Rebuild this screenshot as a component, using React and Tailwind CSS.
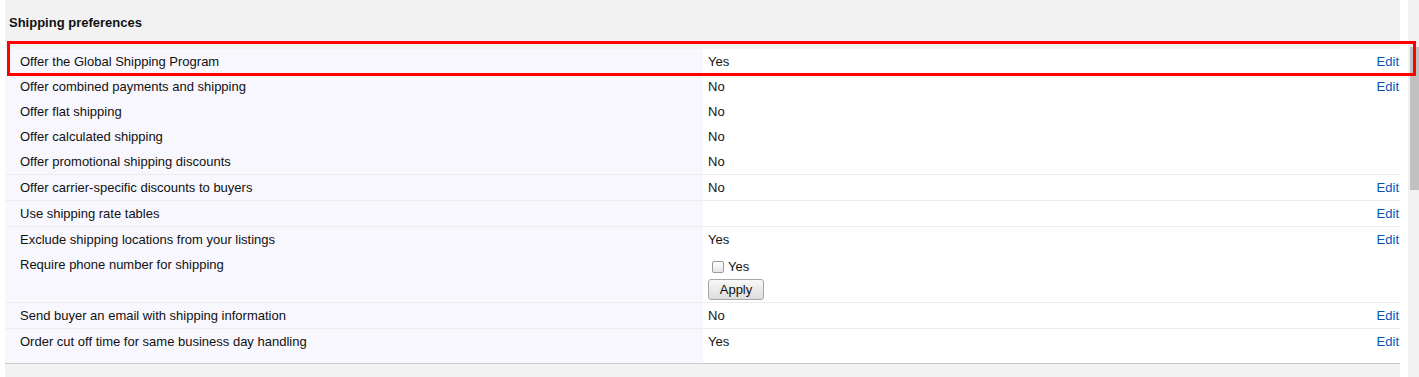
const rowsTop = [
  { label: 'Offer the Global Shipping Program', value: 'Yes', edit: true },
  { label: 'Offer combined payments and shipping', value: 'No', edit: true },
  { label: 'Offer flat shipping', value: 'No' },
  { label: 'Offer calculated shipping', value: 'No' },
  { label: 'Offer promotional shipping discounts', value: 'No' },
];

function EditLink() {
  return <a href="#" className="text-[#0654ba] pr-px">Edit</a>;
}

function Row({ label, value, edit, border, className = 'h-[25px] items-center' }) {
  return (
    <div className={`grid grid-cols-[698px_1fr] ${border ? 'border-t border-[#ededed]' : ''}`}>
      <div className={`flex bg-[#f7f7fd] pl-[15px] ${className}`}>{label}</div>
      <div className={`flex justify-between bg-white pl-[5px] ${className}`}>
        <span>{value}</span>
        {edit && <EditLink />}
      </div>
    </div>
  );
}

export default function App() {
  return (
    <div
      className="relative flex h-[377px] w-[1419px] overflow-hidden bg-white text-[13px] leading-[15px] text-[#111]"
      style={{ fontFamily: '"Liberation Sans", Arial, sans-serif' }}
    >
      <div className="ml-[5px] flex w-[1395px] flex-col bg-[#f2f2f2]">
        <h2 className="h-[49px] pl-[4px] pt-[15px] font-bold">Shipping preferences</h2>

        <div className="flex flex-col">
          {rowsTop.map((r) => (
            <Row key={r.label} {...r} />
          ))}
          <Row border label="Offer carrier-specific discounts to buyers" value="No" edit />
          <Row border label="Use shipping rate tables" value="" edit />
          <Row border label="Exclude shipping locations from your listings" value="Yes" edit />

          <div className="grid h-[50px] grid-cols-[698px_1fr]">
            <div className="bg-[#f7f7fd] pl-[15px] pt-[5px]">Require phone number for shipping</div>
            <div className="flex flex-col items-start bg-white pl-[5px] pt-[7px]">
              <label className="flex items-center gap-[4px] pl-[4px]">
                <span className="h-[12px] w-[12px] rounded-[2px] border border-[#9a9a9a] bg-gradient-to-b from-white to-[#e6e6e6]" />
                <span>Yes</span>
              </label>
              <button className="mt-[5px] h-[21px] w-[56px] rounded-[3px] border border-[#a6a6a6] bg-gradient-to-b from-[#f8f8f8] to-[#dddddd] text-[13px] text-[#111]">
                Apply
              </button>
            </div>
          </div>

          <Row border label="Send buyer an email with shipping information" value="No" edit />
          <div className="border-b border-[#c8c8c8]">
            <Row
              border
              label="Order cut off time for same business day handling"
              value="Yes"
              edit
              className="h-[34px] items-start pt-[5px]"
            />
          </div>
        </div>
      </div>

      <div className="ml-[8px] flex w-[11px] flex-col bg-[#f1f1f1]">
        <div className="ml-[2px] mt-[47px] h-[143px] bg-[#c1c1c1]" />
      </div>

      <div className="pointer-events-none absolute left-[7px] top-[41px] h-[35px] w-[1409px] border-[3px] border-[#ff0000]" />
    </div>
  );
}
